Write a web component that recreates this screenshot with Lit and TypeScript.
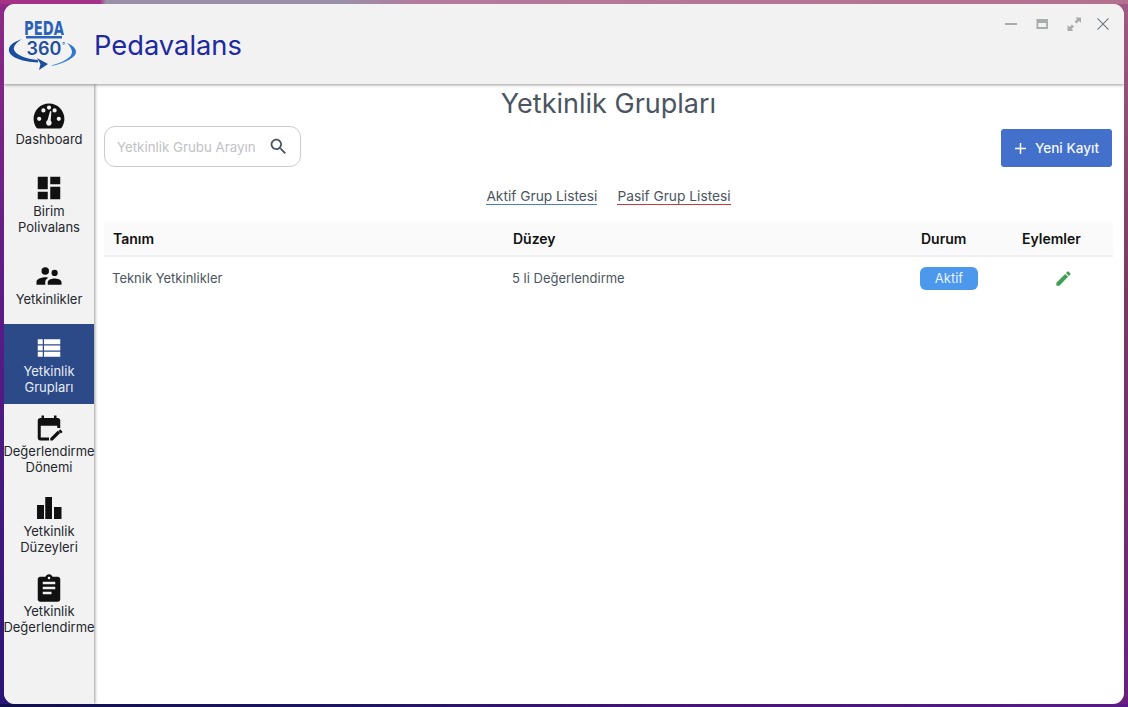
import { LitElement, html, css, svg } from "lit";
import { customElement } from "lit/decorators.js";

const icons: Record<string, any> = {
  dashboard: svg`<path fill-rule="evenodd" d="M12 3C5.900 3 1 7.900 1 14c0 2.300.7 4.400 1.900 6.200.3.5.8.8 1.400.8h15.400c.6 0 1.100-.3 1.400-.8C22.300 18.400 23 16.300 23 14 23 7.900 18.100 3 12 3zM5 15.500a1.500 1.500 0 1 1 0-3 1.500 1.500 0 0 1 0 3zM8 9.500a1.500 1.500 0 1 1 0-3 1.500 1.500 0 0 1 0 3zM12 7.500a1.500 1.500 0 1 1 0-3 1.500 1.500 0 0 1 0 3zM16 9.500a1.500 1.500 0 1 1 0-3 1.500 1.500 0 0 1 0 3zM19 15.500a1.500 1.500 0 1 1 0-3 1.500 1.500 0 0 1 0 3zM12 19a2.200 2.200 0 0 1-1-4.100L12.800 8.500l.9.200-.5 6.500A2.200 2.200 0 0 1 12 19z"/>`,
  grid: svg`<path d="M3 13h8V3H3v10zm0 8h8v-6H3v6zm10 0h8V11h-8v10zm0-18v6h8V3h-8z"/>`,
  people: svg`<path d="M16.500 12a2.500 2.500 0 1 0 0-5 2.500 2.500 0 0 0 0 5zM9 11a3 3 0 1 0 0-6 3 3 0 0 0 0 6zm7.500 3c-1.800 0-5.500.9-5.500 2.800V19h11v-2.200c0-1.900-3.700-2.800-5.500-2.800zM9 13c-2.300 0-7 1.200-7 3.500V19h7v-2.200c0-.9.300-2.300 2.400-3.500C10.500 13.100 9.600 13 9 13z"/>`,
  list: svg`<path d="M3 14h4v-4H3v4zm0 5h4v-4H3v4zM3 9h4V5H3v4zm5 5h13v-4H8v4zm0 5h13v-4H8v4zM8 5v4h13V5H8z"/>`,
  calendar: svg`<path d="M5 22c-1.100 0-2-.9-2-2V6c0-1.100.9-2 2-2h1V2h2v2h8V2h2v2h1c1.100 0 2 .9 2 2v6h-2.400v-1.800H5.400v9.400H12V22H5z"/><path d="M22.600 14.700l-1.300-1.300c-.2-.2-.5-.2-.7 0l-1 1 2 2 1-1c.2-.2.2-.5 0-.7zM13 20.100V22h1.900l6-6-1.900-1.900-6 6z"/>`,
  bars: svg`<path d="M2.400 9.600H8v11.200H2.400zM9 3.200h5.400v17.600H9zM16 11.200h6v9.600h-6z"/>`,
  clipboard: svg`<path d="M19 3h-4.200C14.400 1.800 13.300 1 12 1s-2.400.8-2.800 2H5c-1.100 0-2 .9-2 2v16c0 1.100.9 2 2 2h14c1.100 0 2-.9 2-2V5c0-1.100-.9-2-2-2zm-7 0c.6 0 1 .4 1 1s-.4 1-1 1-1-.4-1-1 .4-1 1-1zm2 14H7v-2h7v2zm3-4H7v-2h10v2zm0-4H7V7h10v2z"/>`,
};

const nav = [
  { icon: "dashboard", w: 34, h: 29, box: "0 2 24 20.700", label: ["Dashboard"] },
  { icon: "grid", w: 30, h: 30, box: "0 0 24 24", label: ["Birim", "Polivalans"] },
  { icon: "people", w: 30, h: 30, box: "0 0 24 24", label: ["Yetkinlikler"] },
  { icon: "list", w: 30, h: 30, box: "0 0 24 24", label: ["Yetkinlik", "Grupları"], active: true },
  { icon: "calendar", w: 30, h: 30, box: "0 0 24 24", label: ["Değerlendirme", "Dönemi"] },
  { icon: "bars", w: 30, h: 30, box: "0 0 24 24", label: ["Yetkinlik", "Düzeyleri"] },
  { icon: "clipboard", w: 30, h: 30, box: "0 0 24 24", label: ["Yetkinlik", "Değerlendirme"] },
];

@customElement("app-root")
export class AppRoot extends LitElement {
  static styles = css`
    :host {
      display: block;
      width: 1128px;
      height: 707px;
      box-sizing: border-box;
      padding: 4px 4px 3px;
      overflow: hidden;
      font-family: Inter, "Noto Sans", sans-serif;
      background:
        linear-gradient(90deg, #a63288 0, #a63288 100px, #9a90a8 106px, #9a90a8 340px, #b47a9c 420px, #b4708f 100%) top / 100% 4px no-repeat,
        linear-gradient(90deg, #120f4e 0%, #1c1464 30%, #45137a 60%, #5a1a88 100%) bottom / 100% 3px no-repeat,
        linear-gradient(180deg, #8f2a86 0%, #5e1c88 40%, #2a1478 100%) left / 50% 100% no-repeat,
        linear-gradient(180deg, #a05a84 0%, #7a3a62 40%, #6a1f80 100%) right / 50% 100% no-repeat;
    }
    .window {
      height: 100%;
      display: flex;
      flex-direction: column;
      border-radius: 11px;
      overflow: hidden;
      background: #fff;
    }
    .header {
      flex: 0 0 80px;
      display: flex;
      align-items: center;
      background: #f2f2f2;
      box-shadow: 0 1px 3px rgba(0, 0, 0, 0.4);
      position: relative;
      z-index: 2;
      padding-left: 4px;
    }
    .logo { width: 68px; height: 60px; flex: none; }
    .brand { margin-left: 18px; margin-top: 2px; font-size: 27.300px; color: #2029a0; }
    .controls {
      margin-left: auto;
      align-self: flex-start;
      display: flex;
      gap: 11.500px;
      padding: 10px 11px 0 0;
    }
    .controls svg { width: 20px; height: 20px; display: block; fill: #a9abad; }
    .controls svg.close { fill: #6c7176; margin-left: -2px; }
    .body { flex: 1; display: flex; min-height: 0; }
    .side {
      flex: none;
      width: 90px;
      background: #f2f2f2;
      box-shadow: 1px 0 3px rgba(0, 0, 0, 0.4);
      position: relative;
      z-index: 1;
    }
    .item {
      height: 80px;
      display: flex;
      flex-direction: column;
      align-items: center;
      justify-content: center;
      color: #23272c;
      font-size: 13px;
      line-height: 16px;
      white-space: nowrap;
    }
    .item svg { display: block; fill: #111; flex: none; }
    .item span { display: block; text-align: center; }
    .item.active { background: #2c4a87; color: #e6ebf4; }
    .item.active svg { fill: #fff; }
    .main { flex: 1; min-width: 0; padding: 0 11px 0 10px; color: #4a5561; }
    h1 {
      margin: 0;
      font-size: 27px;
      font-weight: 400;
      line-height: 40px;
      text-align: center;
    }
    .toolbar {
      display: flex;
      justify-content: space-between;
      align-items: flex-start;
      padding-right: 1px;
      margin-top: 2px;
    }
    .search {
      width: 197px;
      height: 41px;
      box-sizing: border-box;
      border: 1px solid #c9cbcd;
      border-radius: 11px;
      display: flex;
      align-items: center;
      padding: 0 11px 0 12px;
      justify-content: space-between;
      color: #bfc2c5;
      font-size: 13.300px;
    }
    .search svg { width: 21px; height: 21px; fill: #4a5561; }
    .add {
      margin-top: 3px;
      width: 111px;
      height: 38px;
      box-sizing: border-box;
      display: flex;
      align-items: center;
      justify-content: center;
      gap: 8px;
      background: #4270cb;
      color: #f3f6fc;
      border-radius: 3px;
      font-size: 13.600px;
      font-weight: 500;
    }
    .add svg { width: 13px; height: 13px; stroke: #fff; stroke-width: 1.500; fill: none; }
    .tabs {
      display: flex;
      justify-content: center;
      gap: 20px;
      margin-top: 21px;
      font-size: 13.750px;
      line-height: 16px;
    }
    .tabs span { border-bottom: 1px solid #4a7fc4; }
    .tabs span.off { border-color: #c8383f; }
    table {
      width: 1009px;
      margin-top: 17px;
      border-collapse: collapse;
      table-layout: fixed;
      font-size: 13px;
    }
    th {
      box-sizing: border-box;
      height: 34px;
      padding: 0 0 0 1px;
      background: #fafafa;
      border-bottom: 2px solid #f0f0f0;
      color: #111;
      font-size: 14px;
      font-weight: 600;
      text-align: left;
    }
    td { box-sizing: border-box; height: 43px; padding: 0; }
    th:first-child { padding-left: 9px; }
    td:first-child { padding-left: 8px; }
    .badge {
      width: 58px;
      height: 23px;
      display: flex;
      align-items: center;
      justify-content: center;
      background: #4c98ec;
      color: #e8f2fd;
      border-radius: 6px;
    }
    .pen { width: 19px; height: 19px; display: block; fill: #3f9f54; margin-left: 33px; }
  `;

  render() {
    return html`<div class="window">
      <header class="header">
        <svg class="logo" viewBox="0 0 68 60" role="img" aria-label="Peda 360">
          <defs>
            <linearGradient id="arc" x1="0" x2="1" y1="1" y2="0">
              <stop offset="0" stop-color="#3f8fe0" /><stop offset="1" stop-color="#2a6fc8" />
            </linearGradient>
          </defs>
          <text transform="scale(1 1.500)" x="36" y="14.300" text-anchor="middle" font-family="'DejaVu Sans', sans-serif" font-size="13.200" font-weight="700" fill="#2a62b8">PEDA</text>
          <rect x="18" y="22" width="36" height="2.500" fill="#2a62b8" />
          <text x="36" y="41" text-anchor="middle" font-family="Inter, sans-serif" font-size="18" font-weight="600" fill="#1f4f9e">360</text>
          <text x="54" y="34" font-family="Inter, sans-serif" font-size="7" fill="#1f4f9e">°</text>
          <path d="M14 25C5 28 0 32 1 37c1 6 13 11 29 11.500v-2.500C18 45 8 41 6 36c-1-4 3-8 8-11z" fill="#1b4e9e" />
          <path d="M29 44l11 6-9 6 1.500-6z" fill="#1b4e9e" />
          <path d="M59 29c5 2 9 5 9 9 0 5-10 11-24 14v-.8c11-3 20-8 20-13 0-3-2-6-5-9.200z" fill="url(#arc)" />
        </svg>
        <div class="brand">Pedavalans</div>
        <div class="controls">
          <svg viewBox="0 0 20 20"><rect x="4" y="9" width="12" height="2" /></svg>
          <svg viewBox="0 0 20 20"><path fill-rule="evenodd" d="M4.500 5h11.500v10H4.500V5zm1.800 4v4h7.900V9H6.300z" /></svg>
          <svg viewBox="0 0 20 20"><path d="M11.500 3.500H17v5.500l-2-2-2.500 2.500-2-2L13 5.500zM3.500 11l2 2L8 10.500l2 2L7.500 15l2 2H3.500z" /></svg>
          <svg class="close" viewBox="0 0 20 20"><path d="M4.800 4.100L10 9.300l5.200-5.200.7.7L10.700 10l5.200 5.200-.7.7L10 10.700l-5.200 5.200-.7-.7L9.300 10 4.100 4.800z" /></svg>
        </div>
      </header>
      <div class="body">
        <nav class="side">
          ${nav.map(
            (n) => html`<div class="item ${n.active ? "active" : ""}">
              <svg viewBox=${n.box} width=${n.w} height=${n.h}>${icons[n.icon]}</svg>
              ${n.label.map((l) => html`<span>${l}</span>`)}
            </div>`
          )}
        </nav>
        <main class="main">
          <h1>Yetkinlik Grupları</h1>
          <div class="toolbar">
            <div class="search">
              <span>Yetkinlik Grubu Arayın</span>
              <svg viewBox="0 0 24 24"><path d="M15.500 14h-.79l-.28-.27C15.410 12.590 16 11.110 16 9.500 16 5.910 13.090 3 9.500 3S3 5.910 3 9.500 5.910 16 9.500 16c1.610 0 3.090-.59 4.230-1.570l.27.28v.79l5 4.990L20.490 19l-4.990-5zm-6 0C7.010 14 5 11.990 5 9.500S7.010 5 9.500 5 14 7.010 14 9.500 11.990 14 9.500 14z" /></svg>
            </div>
            <div class="add">
              <svg viewBox="0 0 13 13"><path d="M6.500 1v11M1 6.500h11" /></svg>
              <span>Yeni Kayıt</span>
            </div>
          </div>
          <div class="tabs"><span>Aktif Grup Listesi</span><span class="off">Pasif Grup Listesi</span></div>
          <table>
            <colgroup><col style="width:408px" /><col style="width:408px" /><col style="width:101px" /><col /></colgroup>
            <thead><tr><th>Tanım</th><th>Düzey</th><th>Durum</th><th>Eylemler</th></tr></thead>
            <tbody><tr>
              <td>Teknik Yetkinlikler</td>
              <td>5 li Değerlendirme</td>
              <td><div class="badge">Aktif</div></td>
              <td><svg class="pen" viewBox="0 0 24 24"><path d="M3 17.250V21h3.750L17.800 9.900l-3.700-3.700L3 17.250zM20.700 7c.4-.4.4-1 0-1.400l-2.300-2.300c-.4-.4-1-.4-1.400 0l-1.800 1.800 3.700 3.700L20.700 7z" /></svg></td>
            </tr></tbody>
          </table>
        </main>
      </div>
    </div>`;
  }
}
